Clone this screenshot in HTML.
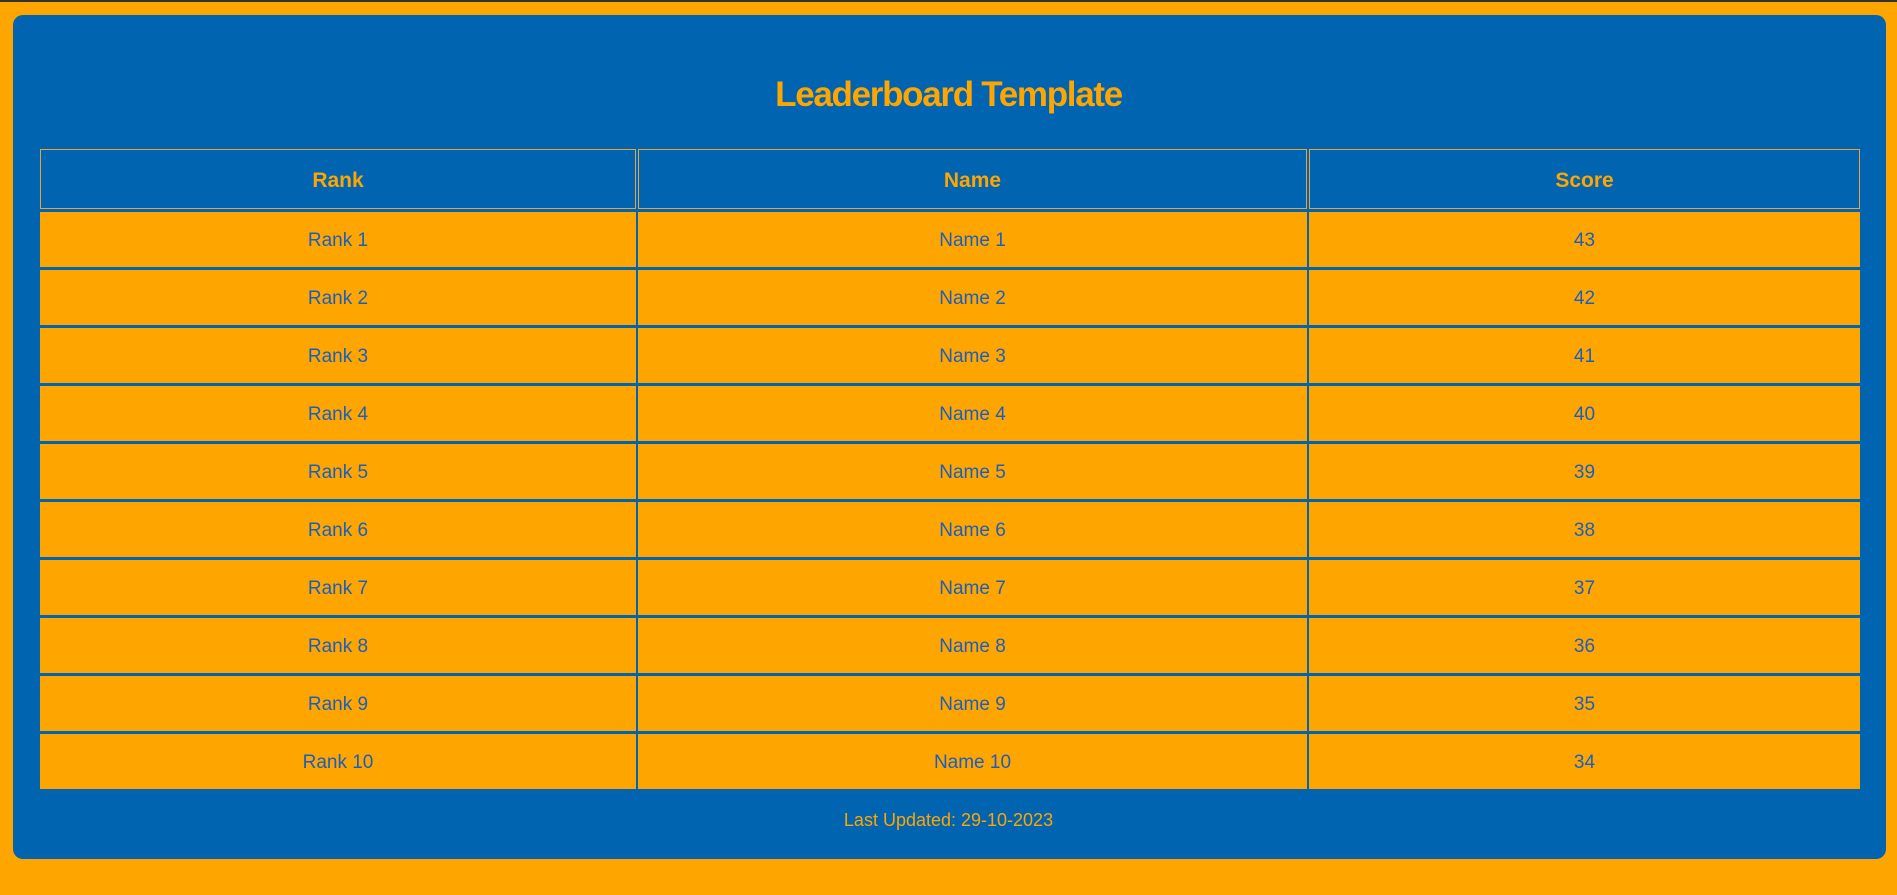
<!DOCTYPE html>
<html><head><style>
html,body{margin:0;padding:0}
body{width:1897px;height:895px;background:#ffa500;position:relative;overflow:hidden;font-family:"Liberation Sans",sans-serif}
.top{position:absolute;left:0;top:0;width:1897px;height:2px;background:#333}
.box{position:absolute;left:13px;top:15px;width:1873px;height:844px;background:#0064b1;border-radius:10px}
h1{position:absolute;left:0;top:71px;width:1897px;margin:0;text-align:center;color:#ffa500;font-size:35px;font-weight:bold;letter-spacing:-1.3px;line-height:48px}
.c{position:absolute;display:flex;align-items:center;justify-content:center;box-sizing:border-box;font-size:19px;color:#1a5fc0;background:#ffa500;padding-top:2px}
.h{background:#0064b1;border:1px solid #e8a43a;color:#ffa500;font-weight:bold;font-size:21px;padding-top:3px}
.f{position:absolute;left:0;top:810px;width:1897px;text-align:center;color:#ffa500;font-size:18px}
</style></head><body>
<div class="top"></div>
<div class="box"></div>
<h1>Leaderboard Template</h1>
<div class="c h" style="left:40px;top:149px;width:596px;height:60px">Rank</div>
<div class="c h" style="left:638px;top:149px;width:669px;height:60px">Name</div>
<div class="c h" style="left:1309px;top:149px;width:551px;height:60px">Score</div>
<div id="rows"></div>
<script>
var s=[43,42,41,40,39,38,37,36,35,34],h='';
for(var i=0;i<10;i++){var t=212+58*i;
h+='<div class="c" style="left:40px;top:'+t+'px;width:596px;height:55px">Rank '+(i+1)+'</div>';
h+='<div class="c" style="left:638px;top:'+t+'px;width:669px;height:55px">Name '+(i+1)+'</div>';
h+='<div class="c" style="left:1309px;top:'+t+'px;width:551px;height:55px">'+s[i]+'</div>';}
document.getElementById('rows').innerHTML=h;
</script>
<div class="f">Last Updated: 29-10-2023</div>
</body></html>
